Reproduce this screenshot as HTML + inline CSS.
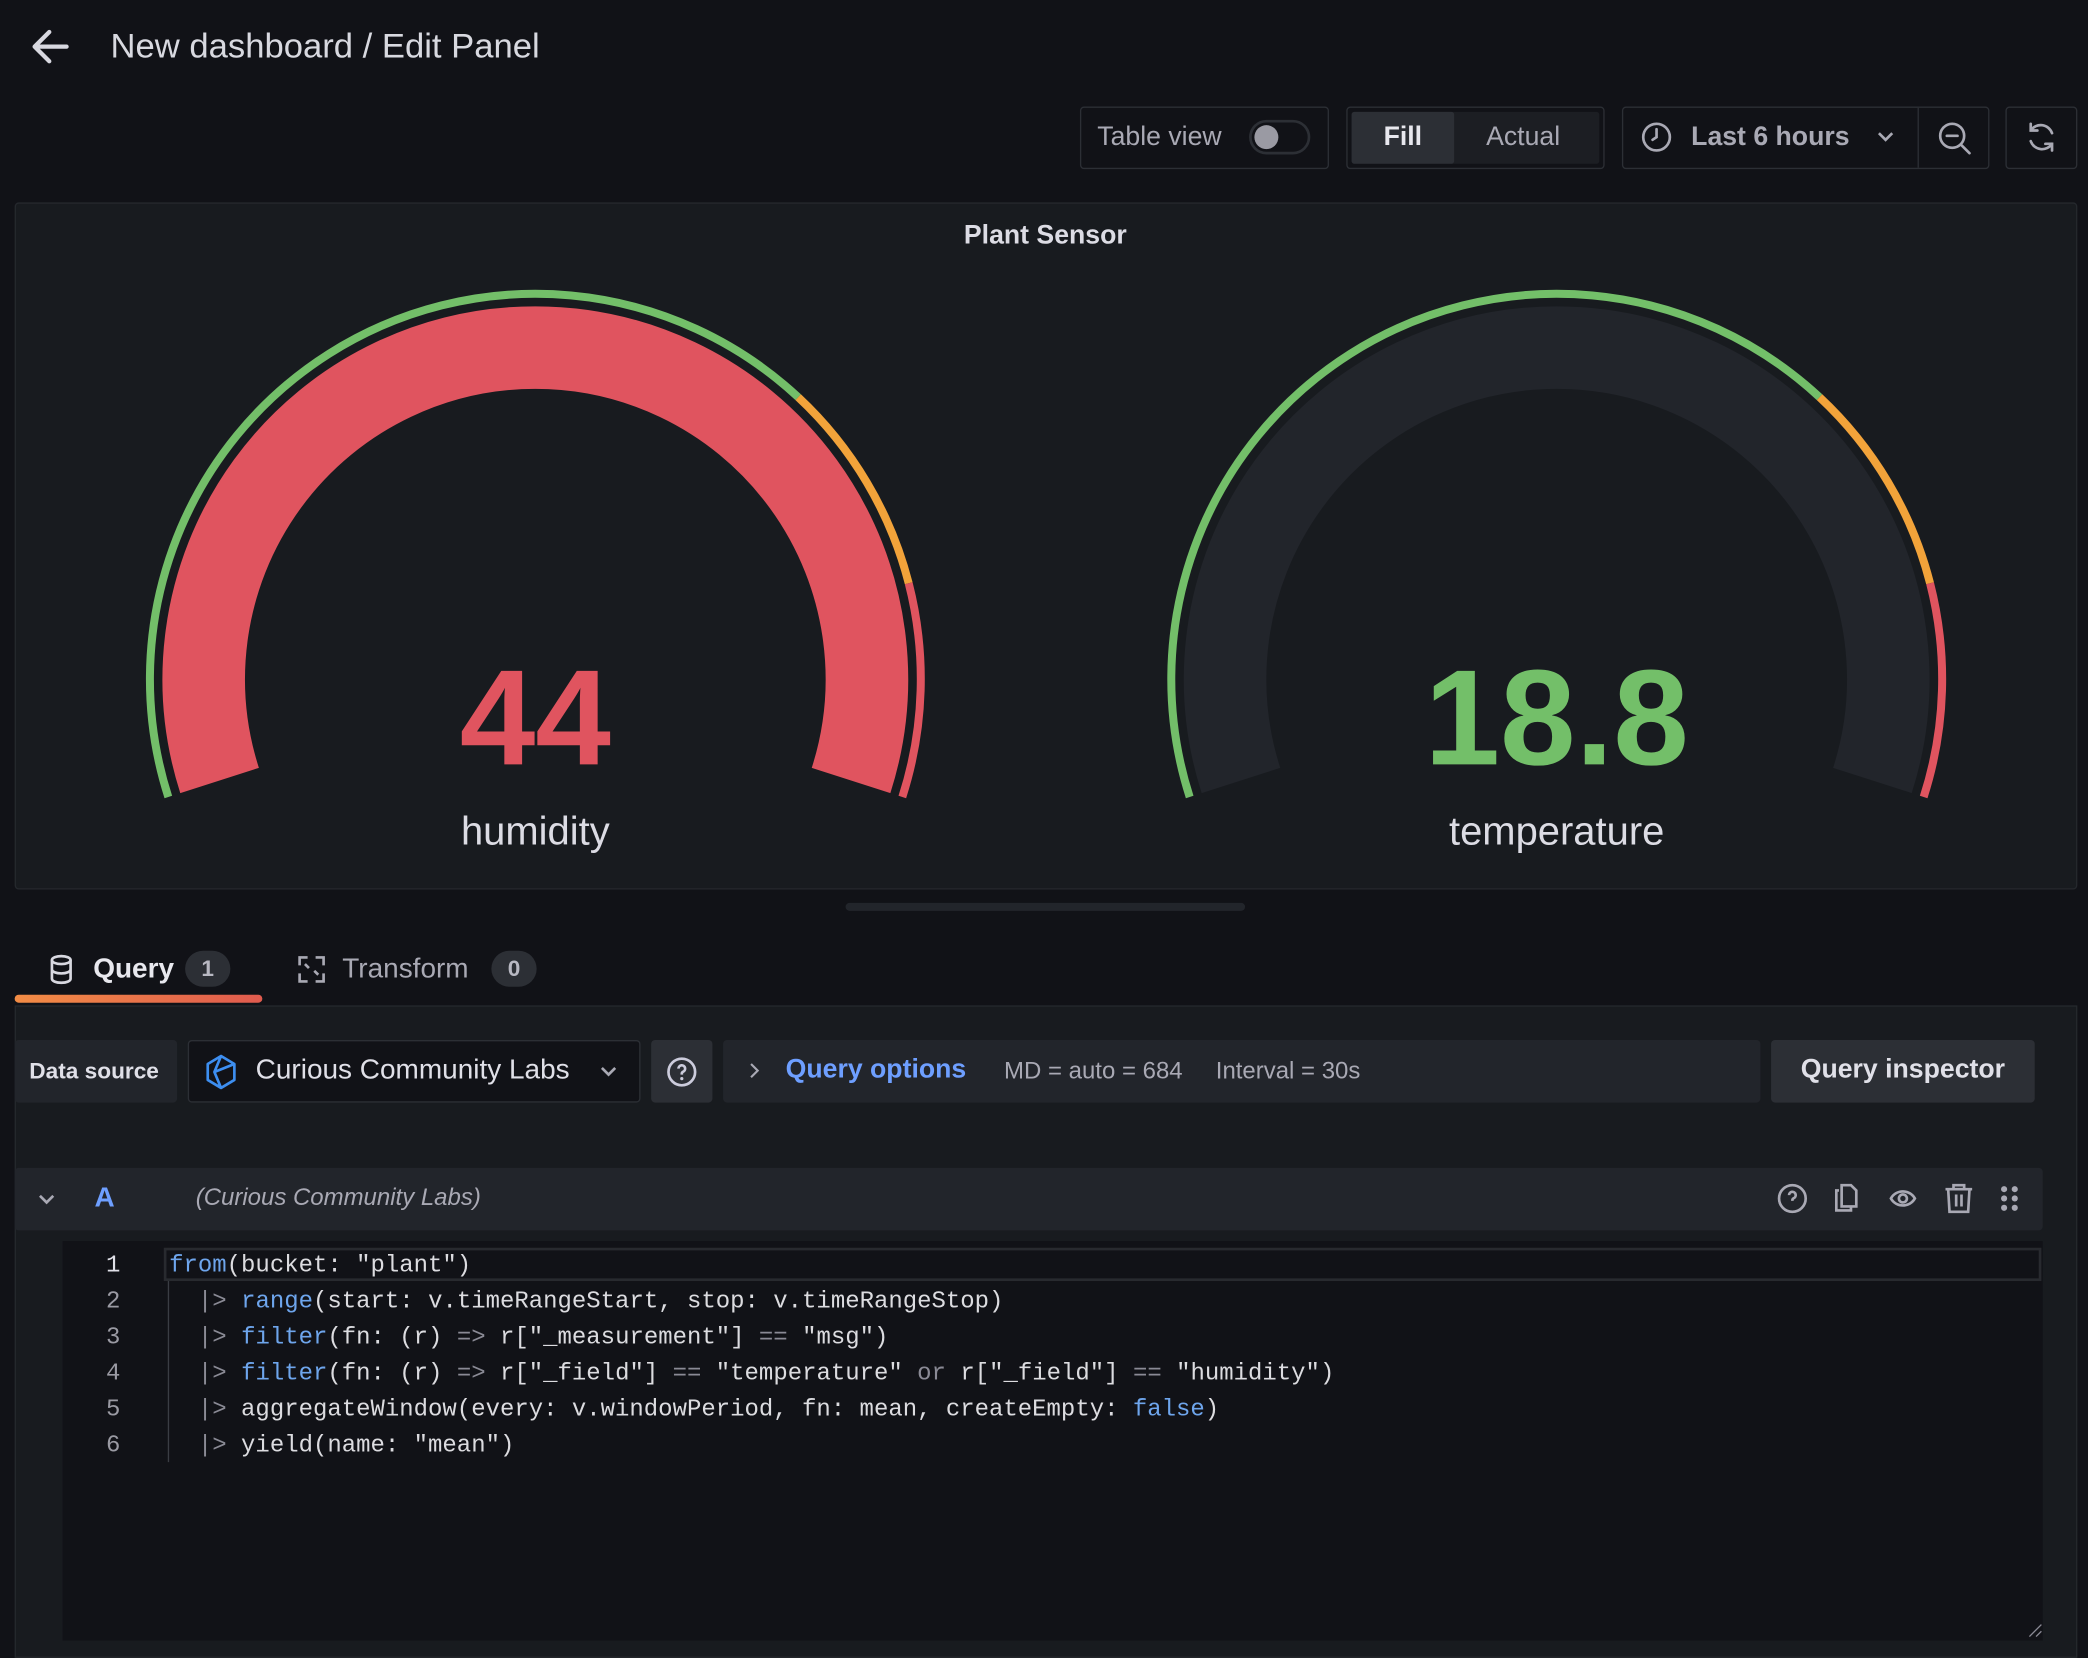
<!DOCTYPE html>
<html><head><meta charset="utf-8"><style>
*{box-sizing:border-box;margin:0;padding:0}
html,body{width:2088px;height:1650px;background:#111217;overflow:hidden}
#w{position:absolute;left:0;top:0;width:1568px;height:1239px;transform:scale(1.33163);transform-origin:0 0;font-family:"Liberation Sans",sans-serif;color:#ccccdc}
.a{position:absolute}
.box{position:absolute;border:1px solid #2c2f35;border-radius:3px}
.t{position:absolute;white-space:nowrap}
.code{position:absolute;left:127px;font-family:"Liberation Mono","DejaVu Sans Mono",monospace;font-size:18px;color:#dcdce0;white-space:pre}
.ln{position:absolute;left:70px;width:30px;text-align:center;font-family:"Liberation Mono",monospace;font-size:18px;color:#9a9aa3}
.k{color:#6ea5ec}.g{color:#8a8a95}
</style></head><body><div id="w">
<svg class="a" style="left:22px;top:20px" width="32" height="30" viewBox="0 0 32 30"><path d="M28 15H5M15 4L4 15l11 11" stroke="#d8d8e0" stroke-width="3.2" fill="none" stroke-linecap="round" stroke-linejoin="round"/></svg>
<div class="t" style="left:83px;top:19px;font-size:26px;color:#d8d9e0">New dashboard / Edit Panel</div>

<div class="box" style="left:811px;top:80px;width:187px;height:47px"></div>
<div class="t" style="left:824px;top:92px;font-size:20px;color:#a9a9b4">Table view</div>
<div class="a" style="left:938px;top:90px;width:46px;height:26px;border:2px solid #2c2f35;border-radius:13px;background:#111217"></div>
<div class="a" style="left:942px;top:94px;width:18px;height:18px;border-radius:9px;background:#9a9aa3"></div>
<div class="box" style="left:1011px;top:80px;width:194px;height:47px"></div>
<div class="a" style="left:1015px;top:84px;width:186px;height:39px;background:#1c1e23;border-radius:2px"></div>
<div class="a" style="left:1015px;top:84px;width:77px;height:39px;background:#2c2f35;border-radius:2px"></div>
<div class="t" style="left:1039px;top:92px;font-size:20px;font-weight:bold;color:#e8e8ee">Fill</div>
<div class="t" style="left:1116px;top:92px;font-size:20px;color:#a9a9b4">Actual</div>
<div class="box" style="left:1218px;top:80px;width:276px;height:47px"></div>
<div class="a" style="left:1440px;top:81px;width:1px;height:45px;background:#2c2f35"></div>
<svg class="a" style="left:1232px;top:91px" width="24" height="24" viewBox="0 0 24 24"><circle cx="12" cy="12" r="10" stroke="#a9a9b4" stroke-width="2" fill="none"/><path d="M12 6v6l-3 2" stroke="#a9a9b4" stroke-width="2" fill="none" stroke-linecap="round"/></svg>
<div class="t" style="left:1270px;top:92px;font-size:20px;font-weight:bold;color:#a9a9b4">Last 6 hours</div>
<svg class="a" style="left:1409px;top:97px" width="14" height="12"><path d="M2 3l5 5 5-5" stroke="#a9a9b4" stroke-width="2" fill="none"/></svg>
<svg class="a" style="left:1455px;top:91px" width="26" height="26" viewBox="0 0 26 26"><circle cx="11" cy="11" r="9" stroke="#a9a9b4" stroke-width="2" fill="none"/><path d="M7 11h8M18 18l6 6" stroke="#a9a9b4" stroke-width="2" stroke-linecap="round"/></svg>
<div class="box" style="left:1506px;top:80px;width:54px;height:47px"></div>
<svg class="a" style="left:1520px;top:90px" width="26" height="26" viewBox="0 0 26 26"><path d="M21 10A9 9 0 0 0 5 8M5 16a9 9 0 0 0 16 2M5 3v5h5M21 23v-5h-5" stroke="#a9a9b4" stroke-width="2" fill="none" stroke-linecap="round"/></svg>

<div class="a" style="left:11px;top:152px;width:1549px;height:516px;background:#181b1f;border:1px solid #25282d;border-radius:3px"></div>
<div class="t" style="left:0;width:1570px;text-align:center;top:166px;font-size:20px;font-weight:bold;color:#dcdce4">Plant Sensor</div>
<svg class="a" style="left:0;top:0" width="1568" height="690">
<g>
<path d="M164.9 586.1A249 249 0 1 1 639.1 586.1" stroke="#e0545f" stroke-width="62" fill="none"/>
<path d="M126.4 598.5A289.5 289.5 0 0 1 599.4 298.3" stroke="#73bf69" stroke-width="6" fill="none"/>
<path d="M599.4 298.3A289.5 289.5 0 0 1 682.4 438" stroke="#f2a33a" stroke-width="6" fill="none"/>
<path d="M682.4 438A289.5 289.5 0 0 1 677.6 598.5" stroke="#e0545f" stroke-width="6" fill="none"/>
</g>
<g transform="translate(767,0)">
<path d="M164.9 586.1A249 249 0 1 1 639.1 586.1" stroke="#22252b" stroke-width="62" fill="none"/>
<path d="M126.4 598.5A289.5 289.5 0 0 1 599.4 298.3" stroke="#73bf69" stroke-width="6" fill="none"/>
<path d="M599.4 298.3A289.5 289.5 0 0 1 682.4 438" stroke="#f2a33a" stroke-width="6" fill="none"/>
<path d="M682.4 438A289.5 289.5 0 0 1 677.6 598.5" stroke="#e0545f" stroke-width="6" fill="none"/>
</g>
<text x="402" y="574" text-anchor="middle" font-family="Liberation Sans" font-weight="bold" font-size="102" fill="#e0545f">44</text>
<text x="402" y="634" text-anchor="middle" font-family="Liberation Sans" font-size="30" fill="#dcdce4">humidity</text>
<text x="1169" y="574" text-anchor="middle" font-family="Liberation Sans" font-weight="bold" font-size="102" fill="#73bf69">18.8</text>
<text x="1169" y="634" text-anchor="middle" font-family="Liberation Sans" font-size="30" fill="#dcdce4">temperature</text>
<rect x="635" y="678" width="300" height="6" rx="3" fill="#22252b"/>
</svg>

<svg class="a" style="left:36px;top:716px" width="20" height="24" viewBox="0 0 20 24"><ellipse cx="10" cy="5" rx="7" ry="3" stroke="#d8d8e0" stroke-width="2" fill="none"/><path d="M3 5v14c0 1.7 3 3 7 3s7-1.3 7-3V5M3 12c0 1.7 3 3 7 3s7-1.3 7-3" stroke="#d8d8e0" stroke-width="2" fill="none"/></svg>
<div class="t" style="left:70px;top:716px;font-size:21px;font-weight:bold;color:#e8e8ee">Query</div>
<div class="a" style="left:139px;top:714px;width:34px;height:27px;border-radius:14px;background:#2c2f35;color:#b8b8c2;font-size:17px;font-weight:bold;text-align:center;line-height:27px">1</div>
<svg class="a" style="left:222px;top:716px" width="24" height="24" viewBox="0 0 24 24"><path d="M3 9V3h6M21 9V3h-6M3 15v6h6M21 15v6h-6M7 8l3 3M17 16l-3-3" stroke="#a9a9b4" stroke-width="2" fill="none"/></svg>
<div class="t" style="left:257px;top:716px;font-size:21px;color:#a9a9b4">Transform</div>
<div class="a" style="left:369px;top:714px;width:34px;height:27px;border-radius:14px;background:#2c2f35;color:#b8b8c2;font-size:17px;font-weight:bold;text-align:center;line-height:27px">0</div>
<div class="a" style="left:11px;top:747px;width:186px;height:6px;border-radius:3px;background:linear-gradient(90deg,#f28c45,#e05b4e)"></div>

<div class="a" style="left:11px;top:755px;width:1549px;height:490px;background:#181b1f;border:1px solid #25282d"></div>
<div class="a" style="left:11px;top:781px;width:122px;height:47px;background:#22252b;border-radius:3px"></div>
<div class="t" style="left:22px;top:795px;font-size:17px;font-weight:bold;color:#e0e0e8">Data source</div>
<div class="a" style="left:141px;top:781px;width:340px;height:47px;background:#111217;border:1px solid #2c2f35;border-radius:3px"></div>
<svg class="a" style="left:153px;top:791px" width="26" height="28" viewBox="0 0 26 28"><path d="M13 2L23 8v12l-10 6L3 20V8z M13 2L8 14l5 12M8 14l15-6" stroke="#3d8ef0" stroke-width="2" fill="none" stroke-linejoin="round"/></svg>
<div class="t" style="left:192px;top:792px;font-size:21px;color:#e0e0e8">Curious Community Labs</div>
<svg class="a" style="left:450px;top:799px" width="14" height="12"><path d="M2 3l5 5 5-5" stroke="#a9a9b4" stroke-width="2" fill="none"/></svg>
<div class="a" style="left:489px;top:781px;width:46px;height:47px;background:#2c2f35;border-radius:3px"></div>
<svg class="a" style="left:500px;top:793px" width="24" height="24" viewBox="0 0 24 24"><circle cx="12" cy="12" r="10" stroke="#ccccdc" stroke-width="2" fill="none"/><path d="M9.5 9.5a2.5 2.5 0 1 1 3.5 2.3c-.6.3-1 .8-1 1.5v.7" stroke="#ccccdc" stroke-width="2" fill="none"/><circle cx="12" cy="17" r="1.2" fill="#ccccdc"/></svg>
<div class="a" style="left:543px;top:781px;width:779px;height:47px;background:#22252b;border-radius:3px"></div>
<svg class="a" style="left:560px;top:797px" width="12" height="14"><path d="M4 2l5 5-5 5" stroke="#a9a9b4" stroke-width="1.6" fill="none"/></svg>
<div class="t" style="left:590px;top:792px;font-size:20px;font-weight:bold;color:#6e9fff">Query options</div>
<div class="t" style="left:754px;top:794px;font-size:18px;color:#a9a9b4">MD = auto = 684</div>
<div class="t" style="left:913px;top:794px;font-size:18px;color:#a9a9b4">Interval = 30s</div>
<div class="a" style="left:1330px;top:781px;width:198px;height:47px;background:#2c2f35;border-radius:3px"></div>
<div class="t" style="left:1330px;width:198px;text-align:center;top:792px;font-size:20px;font-weight:bold;color:#e0e0e8">Query inspector</div>

<div class="a" style="left:11px;top:877px;width:1523px;height:47px;background:#22252b;border-radius:3px"></div>
<svg class="a" style="left:28px;top:895px" width="14" height="12"><path d="M2 3l5 5 5-5" stroke="#a9a9b4" stroke-width="2" fill="none"/></svg>
<div class="t" style="left:71px;top:888px;font-size:21px;font-weight:bold;color:#6e9fff">A</div>
<div class="t" style="left:147px;top:889px;font-size:18px;font-style:italic;color:#a9a9b4">(Curious Community Labs)</div>
<svg class="a" style="left:1330px;top:886px" width="200" height="28" viewBox="0 0 200 28">
<g stroke="#a9a9b4" stroke-width="2" fill="none">
<circle cx="16" cy="14" r="10"/><path d="M13.5 11.5a2.5 2.5 0 1 1 3.5 2.3c-.6.3-1 .8-1 1.5v.5"/>
<path d="M51 8h-2v15h11v-3M53 4h7l4 4v12H53z"/>
<path d="M90 14c4-7 14-7 18 0c-4 7-14 7-18 0z"/><circle cx="99" cy="14" r="3"/>
<path d="M131 7h20M137 7V4h8v3M133 7l1 17h14l1-17M139 11v9M143 11v9"/>
</g>
<g fill="#a9a9b4"><circle cx="175" cy="7" r="2.3"/><circle cx="183" cy="7" r="2.3"/><circle cx="175" cy="14" r="2.3"/><circle cx="183" cy="14" r="2.3"/><circle cx="175" cy="21" r="2.3"/><circle cx="183" cy="21" r="2.3"/></g>
</svg>

<div class="a" style="left:47px;top:932px;width:1487px;height:300px;background:#111217"></div>
<div class="a" style="left:123px;top:937px;width:1410px;height:25px;border:2px solid #282a2f"></div>
<div class="a" style="left:126px;top:962px;width:1px;height:136px;background:#3a3d44"></div>
<div class="ln" style="top:941px;color:#e0e0e8">1</div><div class="ln" style="top:968px">2</div><div class="ln" style="top:995px">3</div><div class="ln" style="top:1022px">4</div><div class="ln" style="top:1049px">5</div><div class="ln" style="top:1076px">6</div>
<div class="code" style="top:941px"><span class="k">from</span>(bucket: "plant")</div>
<div class="code" style="top:968px">  <span class="g">|&gt;</span> <span class="k">range</span>(start: v.timeRangeStart, stop: v.timeRangeStop)</div>
<div class="code" style="top:995px">  <span class="g">|&gt;</span> <span class="k">filter</span>(fn: (r) <span class="g">=&gt;</span> r["_measurement"] <span class="g">==</span> "msg")</div>
<div class="code" style="top:1022px">  <span class="g">|&gt;</span> <span class="k">filter</span>(fn: (r) <span class="g">=&gt;</span> r["_field"] <span class="g">==</span> "temperature" <span class="g">or</span> r["_field"] <span class="g">==</span> "humidity")</div>
<div class="code" style="top:1049px">  <span class="g">|&gt;</span> aggregateWindow(every: v.windowPeriod, fn: mean, createEmpty: <span class="k">false</span>)</div>
<div class="code" style="top:1076px">  <span class="g">|&gt;</span> yield(name: "mean")</div>
<svg class="a" style="left:1522px;top:1218px" width="12" height="12"><path d="M2 11l9-9M7 11l4-4" stroke="#8a8a95" stroke-width="1"/></svg>
</div></body></html>
